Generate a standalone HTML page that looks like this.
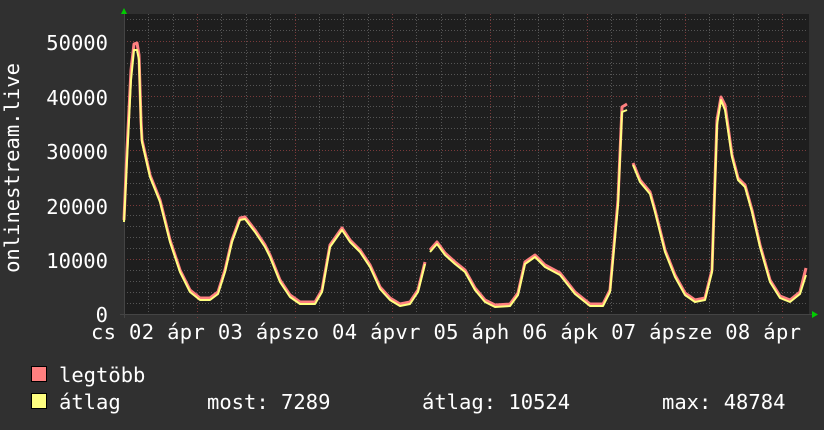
<!DOCTYPE html>
<html><head><meta charset="utf-8"><style>
html,body{margin:0;padding:0;background:#303030;}
svg{display:block}
text{font-family:"DejaVu Sans Mono","Liberation Mono",monospace;fill:#fff;font-size:20.5px}
</style></head><body>
<svg width="824" height="430" viewBox="0 0 824 430">
<rect width="824" height="430" fill="#303030"/>
<rect x="124" y="14" width="685" height="300" fill="#1e1e1e"/>
<g stroke="#555" stroke-width="1" stroke-dasharray="1,2">
<line x1="124" y1="303.5" x2="808" y2="303.5"/><line x1="124" y1="292.5" x2="808" y2="292.5"/><line x1="124" y1="281.5" x2="808" y2="281.5"/><line x1="124" y1="270.5" x2="808" y2="270.5"/>
<line x1="124" y1="248.5" x2="808" y2="248.5"/><line x1="124" y1="237.5" x2="808" y2="237.5"/><line x1="124" y1="226.5" x2="808" y2="226.5"/><line x1="124" y1="215.5" x2="808" y2="215.5"/>
<line x1="124" y1="194.5" x2="808" y2="194.5"/><line x1="124" y1="183.5" x2="808" y2="183.5"/><line x1="124" y1="172.5" x2="808" y2="172.5"/><line x1="124" y1="161.5" x2="808" y2="161.5"/>
<line x1="124" y1="139.5" x2="808" y2="139.5"/><line x1="124" y1="128.5" x2="808" y2="128.5"/><line x1="124" y1="117.5" x2="808" y2="117.5"/><line x1="124" y1="106.5" x2="808" y2="106.5"/>
<line x1="124" y1="85.5" x2="808" y2="85.5"/><line x1="124" y1="74.5" x2="808" y2="74.5"/><line x1="124" y1="63.5" x2="808" y2="63.5"/><line x1="124" y1="52.5" x2="808" y2="52.5"/>
<line x1="124" y1="30.5" x2="808" y2="30.5"/><line x1="124" y1="19.5" x2="808" y2="19.5"/>
<line x1="148.5" y1="14" x2="148.5" y2="314"/><line x1="173.5" y1="14" x2="173.5" y2="314"/><line x1="221.5" y1="14" x2="221.5" y2="314"/><line x1="246.5" y1="14" x2="246.5" y2="314"/><line x1="270.5" y1="14" x2="270.5" y2="314"/>
<line x1="319.5" y1="14" x2="319.5" y2="314"/><line x1="343.5" y1="14" x2="343.5" y2="314"/><line x1="368.5" y1="14" x2="368.5" y2="314"/><line x1="416.5" y1="14" x2="416.5" y2="314"/><line x1="441.5" y1="14" x2="441.5" y2="314"/><line x1="465.5" y1="14" x2="465.5" y2="314"/>
<line x1="514.5" y1="14" x2="514.5" y2="314"/><line x1="538.5" y1="14" x2="538.5" y2="314"/><line x1="563.5" y1="14" x2="563.5" y2="314"/><line x1="611.5" y1="14" x2="611.5" y2="314"/><line x1="636.5" y1="14" x2="636.5" y2="314"/><line x1="660.5" y1="14" x2="660.5" y2="314"/>
<line x1="709.5" y1="14" x2="709.5" y2="314"/><line x1="733.5" y1="14" x2="733.5" y2="314"/><line x1="758.5" y1="14" x2="758.5" y2="314"/>
</g>
<g stroke="#7a3a3a" stroke-width="1" stroke-dasharray="1,2">
<line x1="124" y1="259.5" x2="808" y2="259.5"/><line x1="124" y1="205.5" x2="808" y2="205.5"/><line x1="124" y1="150.5" x2="808" y2="150.5"/><line x1="124" y1="96.5" x2="808" y2="96.5"/><line x1="124" y1="41.5" x2="808" y2="41.5"/>
<line x1="197.5" y1="14" x2="197.5" y2="318"/><line x1="295.5" y1="14" x2="295.5" y2="318"/><line x1="392.5" y1="14" x2="392.5" y2="318"/><line x1="490.5" y1="14" x2="490.5" y2="318"/><line x1="587.5" y1="14" x2="587.5" y2="318"/><line x1="685.5" y1="14" x2="685.5" y2="318"/><line x1="782.5" y1="14" x2="782.5" y2="318"/>
</g>
<line x1="124.5" y1="12" x2="124.5" y2="318" stroke="#444"/>
<line x1="120" y1="314.5" x2="812" y2="314.5" stroke="#444"/>
<polygon points="121,14 127,14 124,8" fill="#0c0"/>
<polygon points="812,311 812,318 818,314.5" fill="#0c0"/>
<g fill="none" stroke-linejoin="round">
<path stroke="#ff8080" stroke-width="3" d="M124,220 L127,150 L131,70 L134,44 L137,43 L139,55 L141,120 L142,140 L150,175 L160,200 L170,240 L180,270 L190,290 L200,298 L210,298 L218,292 L225,270 L232,240 L240,218 L245,217 L255,230 L265,245 L270,255 L280,280 L290,295 L300,302 L315,302 L322,290 L330,245 L342,228 L350,240 L360,250 L370,265 L380,287 L390,298 L400,304 L410,302 L418,290 L425,262 M430,250 L437,242 L445,253 L455,262 L465,270 L475,288 L485,300 L495,305 L510,304 L518,293 L525,262 L535,255 L545,265 L560,273 L575,292 L590,304 L603,304 L610,290 L618,200 L622,107 L627,104 M633,163 L640,180 L650,192 L655,210 L665,250 L675,275 L685,293 L695,300 L705,298 L712,270 L717,120 L721,97 L725,105 L732,155 L738,178 L745,185 L752,210 L760,245 L770,280 L780,296 L790,300 L800,292 L806,268"/>
<path stroke="#ffff80" stroke-width="2" d="M124,222 L127,160 L131,80 L134,50 L137,50 L139,60 L141,125 L142,142 L150,177 L160,202 L170,242 L180,272 L190,292 L200,300 L210,300 L218,294 L225,272 L232,242 L240,220 L245,219 L255,232 L265,247 L270,257 L280,282 L290,297 L300,304 L315,304 L322,292 L330,247 L342,230 L350,242 L360,252 L370,267 L380,289 L390,300 L400,306 L410,304 L418,292 L425,264 M430,252 L437,244 L445,255 L455,264 L465,272 L475,290 L485,302 L495,307 L510,306 L518,295 L525,264 L535,257 L545,267 L560,275 L575,294 L590,306 L603,306 L610,292 L618,205 L622,112 L627,110 M633,165 L640,182 L650,194 L655,212 L665,252 L675,277 L685,295 L695,302 L705,300 L712,272 L717,125 L721,100 L725,110 L732,157 L738,180 L745,187 L752,212 L760,247 L770,282 L780,298 L790,302 L800,294 L806,275"/>
</g>
<g text-anchor="end">
<text x="108" y="50">50000</text><text x="108" y="105">40000</text><text x="108" y="159">30000</text><text x="108" y="214">20000</text><text x="108" y="268">10000</text><text x="108" y="322">0</text>
</g>
<text transform="translate(19,168) rotate(-90)" text-anchor="middle">onlinestream.live</text>
<text x="91" y="339" textLength="710" lengthAdjust="spacing">cs 02 ápr 03 ápszo 04 ápvr 05 áph 06 ápk 07 ápsze 08 ápr</text>
<rect x="31.5" y="366.5" width="15" height="15" fill="#ff8080" stroke="#000"/>
<rect x="31.5" y="393.5" width="15" height="15" fill="#ffff80" stroke="#000"/>
<text x="59" y="382">legtöbb</text>
<text x="59" y="409">átlag</text>
<text x="207" y="409">most: 7289</text>
<text x="422" y="409">átlag: 10524</text>
<text x="662" y="409">max: 48784</text>
</svg>
</body></html>
